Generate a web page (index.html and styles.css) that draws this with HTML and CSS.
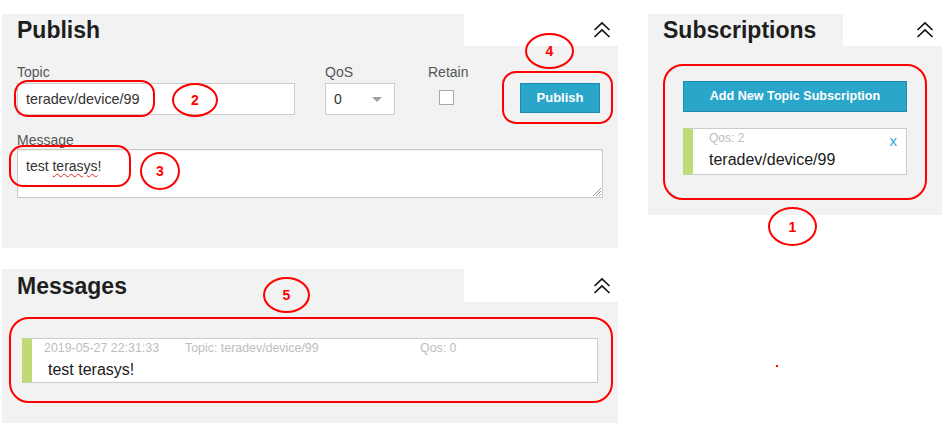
FILE: index.html
```html
<!DOCTYPE html>
<html lang="en">
<head>
<meta charset="utf-8">
<title>MQTT Client</title>
<link rel="stylesheet" href="styles.css">
</head>
<body>
<div class="page">
  <div class="left">
    <section class="panel publish">
      <header class="panel-head">
        <div class="tab tab-wide"><h2>Publish</h2></div>
        <div class="tools">
          <svg class="chev" width="18" height="18" viewBox="0 0 18 18"><polyline points="1.5,9 9,1.8 16.5,9"/><polyline points="1.5,16 9,8.8 16.5,16"/></svg>
        </div>
      </header>
      <div class="panel-body publish-body">
        <div class="form-row">
          <div class="field f-topic">
            <div class="label">Topic</div>
            <div class="input">teradev/device/99</div>
          </div>
          <div class="field f-qos">
            <div class="label">QoS</div>
            <div class="select"><span>0</span><span class="caret"></span></div>
          </div>
          <div class="field f-retain">
            <div class="label">Retain</div>
            <div class="checkbox"></div>
          </div>
          <div class="field f-action">
            <div class="btn btn-publish">Publish</div>
          </div>
        </div>
        <div class="field f-message">
          <div class="label">Message</div>
          <div class="textarea">test <span class="misspelled">terasys</span>!
            <svg class="grip" width="9" height="9" viewBox="0 0 9 9"><line x1="1" y1="9" x2="9" y2="1"/><line x1="4" y1="9" x2="9" y2="4"/><line x1="7" y1="9" x2="9" y2="7"/></svg>
          </div>
        </div>
      </div>
    </section>

    <section class="panel messages">
      <header class="panel-head head-tall">
        <div class="tab tab-wide"><h2>Messages</h2></div>
        <div class="tools">
          <svg class="chev" width="18" height="18" viewBox="0 0 18 18"><polyline points="1.5,9 9,1.8 16.5,9"/><polyline points="1.5,16 9,8.8 16.5,16"/></svg>
        </div>
      </header>
      <div class="panel-body messages-body">
        <div class="item msg">
          <div class="meta"><span class="m-date">2019-05-27 22:31:33</span><span class="m-topic">Topic: teradev/device/99</span><span class="m-qos">Qos: 0</span></div>
          <div class="msg-text">test terasys!</div>
        </div>
      </div>
    </section>
  </div>

  <div class="right">
    <section class="panel subs">
      <header class="panel-head">
        <div class="tab tab-narrow"><h2>Subscriptions</h2></div>
        <div class="tools tools-subs">
          <svg class="chev" width="18" height="18" viewBox="0 0 18 18"><polyline points="1.5,9 9,1.8 16.5,9"/><polyline points="1.5,16 9,8.8 16.5,16"/></svg>
        </div>
      </header>
      <div class="panel-body subs-body">
        <div class="btn btn-add">Add New Topic Subscription</div>
        <div class="item sub">
          <div class="sub-main">
            <div class="sub-qos">Qos: 2</div>
            <div class="sub-topic">teradev/device/99</div>
          </div>
          <div class="sub-close">x</div>
        </div>
      </div>
    </section>
  </div>
</div>

<div class="anno rect a1"></div>
<div class="anno oval c1">1</div>
<div class="anno rect a2"></div>
<div class="anno oval c2">2</div>
<div class="anno rect a3"></div>
<div class="anno oval c3">3</div>
<div class="anno rect a4"></div>
<div class="anno oval c4">4</div>
<div class="anno rect a5"></div>
<div class="anno oval c5">5</div>
<div class="anno dot"></div>
</body>
</html>
```

FILE: styles.css
```css
html, body {
  margin: 0;
  background: #ffffff;
}
body {
  padding: 14px 0 0 2px;
  font-family: "Liberation Sans", Arial, sans-serif;
  color: #333;
  position: relative;
}
.page {
  display: flex;
  gap: 30px;
  align-items: flex-start;
}
.left {
  width: 616px;
  display: flex;
  flex-direction: column;
  gap: 21px;
}
.right {
  width: 294px;
}

/* panel */
.panel-head {
  display: flex;
  height: 32px;
}
.head-tall {
  height: 33px;
}
.tab {
  background: #f2f2f2;
  padding-left: 15px;
  box-sizing: border-box;
}
.tab-wide { width: 462px; }
.tab-narrow { width: 195px; }
.tab h2 {
  margin: 0;
  font-size: 23px;
  line-height: 32px;
  font-weight: bold;
  color: #1e1e1e;
}
.head-tall .tab h2 {
  line-height: 34px;
}
.tools {
  flex: 1;
  display: flex;
  justify-content: flex-end;
  align-items: center;
  padding-right: 7px;
}
.tools-subs {
  padding-right: 8px;
}
.chev {
  display: block;
  fill: none;
  stroke: #111;
  stroke-width: 1.6;
}
.panel-body {
  background: #f2f2f2;
}

/* publish */
.publish-body {
  padding: 18px 15px 50px;
}
.form-row {
  display: flex;
  align-items: flex-start;
}
.label {
  font-size: 14px;
  line-height: 16px;
  color: #555;
  margin-bottom: 3px;
}
.f-topic { width: 278px; }
.input {
  height: 32px;
  box-sizing: border-box;
  border: 1px solid #cccccc;
  background: #fff;
  padding-left: 8px;
  font-size: 14.4px;
  line-height: 30px;
  color: #333;
}
.f-qos {
  margin-left: 30px;
  width: 70px;
}
.select {
  height: 32px;
  box-sizing: border-box;
  border: 1px solid #cccccc;
  background: #fff;
  padding: 0 12px 0 8px;
  font-size: 14px;
  color: #333;
  display: flex;
  align-items: center;
  justify-content: space-between;
}
.caret {
  width: 0;
  height: 0;
  border-left: 5px solid transparent;
  border-right: 5px solid transparent;
  border-top: 5px solid #a0a0a0;
}
.f-retain {
  margin-left: 33px;
  width: 40px;
}
.checkbox {
  width: 15px;
  height: 15px;
  box-sizing: border-box;
  border: 1px solid #a8a8a8;
  background: #fff;
  margin: 10px 0 0 11px;
}
.f-action {
  margin-left: 52px;
  padding-top: 19px;
}
.btn {
  box-sizing: border-box;
  background: #2ba6cb;
  border: 1px solid #1f8aab;
  color: #fff;
  font-weight: bold;
  text-align: center;
}
.btn-publish {
  width: 80px;
  height: 30px;
  font-size: 13px;
  line-height: 28px;
}
.f-message {
  margin-top: 17px;
}
.f-message .label {
  margin-bottom: 1px;
}
.textarea {
  position: relative;
  height: 49px;
  box-sizing: border-box;
  border: 1px solid #c8c8c8;
  background: #fff;
  box-shadow: inset 0 1px 2px rgba(0,0,0,0.06);
  padding: 2px 8px;
  font-size: 14px;
  line-height: 28px;
  color: #333;
}
.misspelled {
  text-decoration: underline wavy #e02020;
  text-decoration-thickness: 1px;
  text-underline-offset: 2px;
}
.grip {
  position: absolute;
  right: 1px;
  bottom: 1px;
  stroke: #9a9a9a;
  stroke-width: 1;
}

/* list items */
.item {
  background: #fff;
  border: 1px solid #cccccc;
  border-left: 10px solid #c0da78;
  box-sizing: border-box;
}

/* messages */
.messages-body {
  padding: 36px 20px 40px;
}
.msg {
  height: 45px;
}
.meta {
  padding: 2px 0 0 12px;
  font-size: 12.4px;
  line-height: 15px;
  color: #bdbdbd;
  display: flex;
}
.m-date { width: 141px; }
.m-topic { width: 235px; }
.msg-text {
  padding: 4px 0 0 16px;
  font-size: 16px;
  line-height: 20px;
  color: #1a1a1a;
}

/* subscriptions */
.subs-body {
  padding: 35px 35px 40px;
}
.btn-add {
  height: 31px;
  font-size: 12.6px;
  line-height: 29px;
  margin-bottom: 16px;
}
.sub {
  height: 47px;
  display: flex;
  justify-content: space-between;
}
.sub-main {
  padding: 2px 0 0 16px;
}
.sub-qos {
  font-size: 12px;
  line-height: 15px;
  color: #bdbdbd;
}
.sub-topic {
  margin-top: 4px;
  font-size: 16px;
  line-height: 20px;
  color: #1a1a1a;
}
.sub-close {
  padding: 4px 9px 0 0;
  font-size: 15px;
  line-height: 16px;
  color: #3aa8d6;
}

/* red annotations overlay */
.anno {
  position: absolute;
  box-sizing: border-box;
  border: 2px solid #ff0000;
  color: #ff0000;
  font-weight: bold;
  font-size: 14px;
  display: flex;
  align-items: center;
  justify-content: center;
}
.oval { border-radius: 50%; }
.a1 { left: 663px; top: 64px; width: 264px; height: 136px; border-radius: 20px; }
.c1 { left: 768px; top: 207px; width: 49px; height: 39px; }
.a2 { left: 14px; top: 80px; width: 141px; height: 37px; border-radius: 14px; }
.c2 { left: 172px; top: 83px; width: 46px; height: 34px; }
.a3 { left: 9px; top: 145px; width: 122px; height: 42px; border-radius: 14px; }
.c3 { left: 140px; top: 152px; width: 40px; height: 38px; }
.a4 { left: 502px; top: 71px; width: 111px; height: 53px; border-radius: 14px; }
.c4 { left: 525px; top: 33px; width: 49px; height: 36px; }
.a5 { left: 9px; top: 317px; width: 604px; height: 86px; border-radius: 20px; }
.c5 { left: 263px; top: 277px; width: 47px; height: 36px; }
.dot { left: 776px; top: 365px; width: 2px; height: 2px; border: 0; background: #ff0000; }
```
